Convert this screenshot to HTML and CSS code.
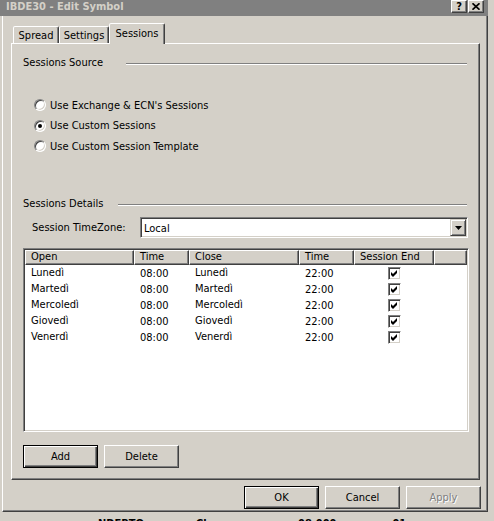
FILE: index.html
```html
<!DOCTYPE html>
<html>
<head>
<meta charset="utf-8">
<title>IBDE30 - Edit Symbol</title>
<link rel="stylesheet" href="styles.css">
</head>
<body>
<div class="screen">
  <div class="window">
    <div class="titlebar">
      <span class="title">IBDE30 - Edit Symbol</span>
      <span class="cap-btn help">?</span>
      <span class="cap-btn close"><svg width="8" height="7" viewBox="0 0 8 7"><path d="M0.5 0.3 L7.5 6.7 M7.5 0.3 L0.5 6.7" stroke="#000" stroke-width="1.7" fill="none"/></svg></span>
    </div>
    <div class="frame">
      <div class="tabs">
        <div class="tab t-spread">Spread</div>
        <div class="tab t-settings">Settings</div>
        <div class="tab t-sessions active">Sessions</div>
      </div>
      <div class="panel">
        <div class="group">
          <span class="group-label gl1">Sessions Source</span>
          <span class="groove"></span>
        </div>
        <div class="radios">
          <div class="radio-row"><span class="radio"></span><span>Use Exchange &amp; ECN's Sessions</span></div>
          <div class="radio-row"><span class="radio checked"></span><span>Use Custom Sessions</span></div>
          <div class="radio-row"><span class="radio"></span><span>Use Custom Session Template</span></div>
        </div>
        <div class="group g2">
          <span class="group-label gl2">Sessions Details</span>
          <span class="groove"></span>
        </div>
        <div class="tz-row">
          <span class="tz-label">Session TimeZone:</span>
          <div class="combo">
            <span class="combo-text">Local</span>
            <span class="combo-btn"><svg width="7" height="4" viewBox="0 0 7 4"><path d="M0 0H7L3.5 4Z" fill="#000"/></svg></span>
          </div>
        </div>
        <div class="list">
          <div class="list-head">
            <span class="hcell c1">Open</span>
            <span class="hcell c2">Time</span>
            <span class="hcell c3">Close</span>
            <span class="hcell c4">Time</span>
            <span class="hcell c5">Session End</span>
            <span class="hcell cfill"></span>
          </div>
          <div class="list-row">
            <span class="cell c1">Lunedì</span><span class="cell c2 num">08:00</span><span class="cell c3">Lunedì</span><span class="cell c4 num">22:00</span>
            <span class="cell c5 chk"><span class="checkbox"><svg width="7" height="7" viewBox="0 0 7 7"><path d="M0 2L2 4L6 0V3L2 7L0 5Z" fill="#000"/></svg></span></span>
          </div>
          <div class="list-row">
            <span class="cell c1">Martedì</span><span class="cell c2 num">08:00</span><span class="cell c3">Martedì</span><span class="cell c4 num">22:00</span>
            <span class="cell c5 chk"><span class="checkbox"><svg width="7" height="7" viewBox="0 0 7 7"><path d="M0 2L2 4L6 0V3L2 7L0 5Z" fill="#000"/></svg></span></span>
          </div>
          <div class="list-row">
            <span class="cell c1">Mercoledì</span><span class="cell c2 num">08:00</span><span class="cell c3">Mercoledì</span><span class="cell c4 num">22:00</span>
            <span class="cell c5 chk"><span class="checkbox"><svg width="7" height="7" viewBox="0 0 7 7"><path d="M0 2L2 4L6 0V3L2 7L0 5Z" fill="#000"/></svg></span></span>
          </div>
          <div class="list-row">
            <span class="cell c1">Giovedì</span><span class="cell c2 num">08:00</span><span class="cell c3">Giovedì</span><span class="cell c4 num">22:00</span>
            <span class="cell c5 chk"><span class="checkbox"><svg width="7" height="7" viewBox="0 0 7 7"><path d="M0 2L2 4L6 0V3L2 7L0 5Z" fill="#000"/></svg></span></span>
          </div>
          <div class="list-row">
            <span class="cell c1">Venerdì</span><span class="cell c2 num">08:00</span><span class="cell c3">Venerdì</span><span class="cell c4 num">22:00</span>
            <span class="cell c5 chk"><span class="checkbox"><svg width="7" height="7" viewBox="0 0 7 7"><path d="M0 2L2 4L6 0V3L2 7L0 5Z" fill="#000"/></svg></span></span>
          </div>
        </div>
        <div class="btn-row">
          <span class="btn default">Add</span>
          <span class="btn">Delete</span>
        </div>
      </div>
      <div class="dlg-row">
        <span class="btn default">OK</span>
        <span class="btn">Cancel</span>
        <span class="btn disabled">Apply</span>
      </div>
    </div>
  </div>
  <div class="under">
    <span class="u1">NDEBTQ</span>
    <span class="u2">Close</span>
    <span class="u3">08:000</span>
    <span class="u4">01</span>
  </div>
</div>
</body>
</html>
```
FILE: styles.css
```css
* { box-sizing: border-box; }

html, body {
  margin: 0;
  padding: 0;
}

body {
  background: #d4d0c8;
  color: #000;
  font-family: "DejaVu Sans Condensed", "Liberation Sans", sans-serif;
  font-size: 11px;
}

.screen {
  width: 494px;
  height: 521px;
  overflow: hidden;
}

.window {
  width: 488px;
}

/* ---------- title bar ---------- */
.titlebar {
  height: 16px;
  background: #808080;
  display: flex;
  align-items: flex-start;
  padding-left: 6px;
}

.title {
  flex: 1;
  color: #d4d0c8;
  font-weight: bold;
  line-height: 14px;
}

.cap-btn {
  width: 16px;
  height: 13px;
  background: #d4d0c8;
  border: 1px solid;
  border-color: #fff #404040 #404040 #fff;
  box-shadow: inset -1px -1px 0 #808080;
  display: flex;
  align-items: center;
  justify-content: center;
  font-weight: bold;
  font-size: 11px;
  line-height: 11px;
  color: #000;
}

.help { margin-right: 1px; }
.close { margin-right: 4px; }

/* ---------- window frame ---------- */
.frame {
  margin-left: 2px;
  height: 496px;
  border-left: 1px solid #fff;
  border-right: 1px solid #404040;
  border-bottom: 1px solid #404040;
  box-shadow: inset -1px -1px 0 #808080;
  padding-left: 8px;
  display: flex;
  flex-direction: column;
}

/* ---------- tabs ---------- */
.tabs {
  height: 27px;
  display: flex;
  align-items: flex-end;
  padding-left: 2px;
}

.tab {
  height: 17px;
  border: 1px solid;
  border-bottom: none;
  border-color: #fff #404040 transparent #fff;
  border-radius: 2px 2px 0 0;
  box-shadow: inset -1px 0 0 #808080;
  display: flex;
  align-items: center;
  justify-content: center;
  background: #d4d0c8;
}

.t-spread { width: 46px; }
.t-settings { width: 50px; }
.t-sessions { width: 56px; }

.tab.active {
  height: 21px;
  margin-bottom: -1px;
  position: relative;
  z-index: 1;
  padding-bottom: 1px;
}

/* ---------- tab panel ---------- */
.panel {
  width: 469px;
  height: 437px;
  border: 1px solid;
  border-color: #fff #404040 #404040 #fff;
  box-shadow: inset -1px -1px 0 #808080;
  padding: 12px 12px 0 11px;
  display: flex;
  flex-direction: column;
}

.group {
  display: flex;
  line-height: 13px;
  height: 13px;
}

.group-label { flex: none; }
.gl1 { width: 103px; }
.gl2 { width: 95px; }

.groove {
  flex: 1;
  height: 2px;
  margin-top: 7px;
  border-top: 1px solid #808080;
  border-bottom: 1px solid #fff;
}

.radios {
  margin-top: 26px;
  padding-left: 11px;
}

.radio-row {
  height: 20.5px;
  display: flex;
  align-items: center;
}

.radio {
  width: 12px;
  height: 12px;
  margin-right: 4px;
  border-radius: 50%;
  border: 1px solid;
  border-color: #808080 #fff #fff #808080;
  background: #fff;
  box-shadow: inset 1px 1px 0 #404040, inset -1px -1px 0 #d4d0c8;
  display: flex;
  align-items: center;
  justify-content: center;
}

.radio.checked::after {
  content: "";
  width: 4px;
  height: 4px;
  border-radius: 50%;
  background: #000;
}

.g2 { margin-top: 40.5px; }

/* ---------- timezone ---------- */
.tz-row {
  margin-top: 7px;
  display: flex;
  align-items: center;
  padding-left: 9px;
  margin-right: -1px;
}

.tz-label { width: 108px; flex: none; }

.combo {
  flex: 1;
  height: 21px;
  border: 1px solid;
  border-color: #808080 #fff #fff #808080;
  box-shadow: inset 1px 1px 0 #404040, inset -1px -1px 0 #d4d0c8;
  background: #fff;
  padding: 2px 1px 1px 2px;
  display: flex;
}

.combo-text {
  flex: 1;
  padding-left: 1px;
  line-height: 17px;
}

.combo-btn {
  width: 16px;
  height: 17px;
  margin-top: -1px;
  background: #d4d0c8;
  border: 1px solid;
  border-color: #d4d0c8 #404040 #404040 #d4d0c8;
  box-shadow: inset 1px 1px 0 #fff, inset -1px -1px 0 #808080;
  display: flex;
  align-items: center;
  justify-content: center;
}

/* ---------- list ---------- */
.list {
  margin-top: 10px;
  margin-right: -2px;
  height: 184px;
  border: 1px solid;
  border-color: #808080 #fff #fff #808080;
  box-shadow: inset 1px 1px 0 #404040, inset -1px -1px 0 #d4d0c8;
  background: #fff;
  padding: 1px;
  display: flex;
  flex-direction: column;
}

.list-head {
  display: flex;
  height: 15px;
  flex: none;
}

.hcell {
  background: #d4d0c8;
  border: 1px solid;
  border-color: #fff #404040 #404040 #fff;
  box-shadow: inset -1px -1px 0 #808080;
  padding-left: 5px;
  line-height: 12px;
  white-space: nowrap;
  overflow: hidden;
}

.c1 { width: 109px; flex: none; }
.c2 { width: 55px; flex: none; }
.c3 { width: 110px; flex: none; }
.c4 { width: 55px; flex: none; }
.c5 { width: 80px; flex: none; }
.cfill { flex: 1; }

.list-row {
  display: flex;
  height: 16px;
  flex: none;
}

.cell {
  padding-left: 6px;
  line-height: 16px;
  white-space: nowrap;
}

.cell.num { padding-top: 1px; }

.cell.chk {
  padding-left: 0;
  display: flex;
  align-items: center;
  justify-content: center;
}

.checkbox {
  width: 13px;
  height: 13px;
  border: 1px solid;
  border-color: #808080 #fff #fff #808080;
  box-shadow: inset 1px 1px 0 #404040, inset -1px -1px 0 #d4d0c8;
  background: #fff;
  display: flex;
  align-items: center;
  justify-content: center;
}

/* ---------- buttons ---------- */
.btn-row {
  margin-top: 13px;
  display: flex;
  gap: 6px;
}

.dlg-row {
  margin-top: 6px;
  display: flex;
  justify-content: flex-end;
  gap: 6px;
  padding-right: 6px;
}

.btn {
  width: 75px;
  height: 23px;
  flex: none;
  background: #d4d0c8;
  border: 1px solid;
  border-color: #fff #404040 #404040 #fff;
  box-shadow: inset -1px -1px 0 #808080;
  display: flex;
  align-items: center;
  justify-content: center;
}

.btn.default {
  border-color: #000;
  box-shadow: inset 1px 1px 0 #fff, inset -1px -1px 0 #404040, inset -2px -2px 0 #808080;
}

.btn.disabled {
  color: #808080;
  text-shadow: 1px 1px 0 #fff;
}

/* ---------- content behind the dialog ---------- */
.under {
  display: flex;
  padding-top: 5px;
  line-height: 13px;
  font-weight: bold;
}

.u1 { margin-left: 98px; }
.u2 { margin-left: 52px; }
.u3 { margin-left: 72px; }
.u4 { margin-left: 56px; }
```
